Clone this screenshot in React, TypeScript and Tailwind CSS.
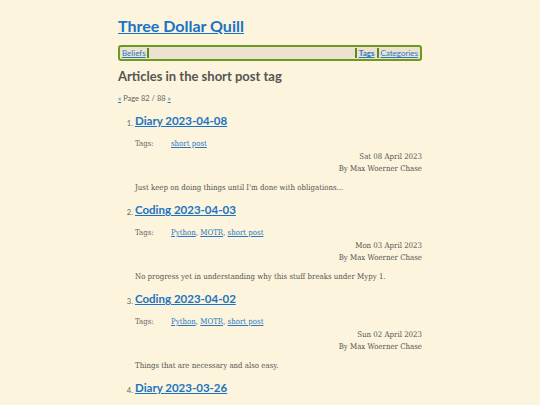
import React from "react";

const posts = [
  { title: "Diary 2023-04-08", tags: ["short post"], date: "Sat 08 April 2023", excerpt: "Just keep on doing things until I'm done with obligations..." },
  { title: "Coding 2023-04-03", tags: ["Python", "MOTR", "short post"], date: "Mon 03 April 2023", excerpt: "No progress yet in understanding why this stuff breaks under Mypy 1." },
  { title: "Coding 2023-04-02", tags: ["Python", "MOTR", "short post"], date: "Sun 02 April 2023", excerpt: "Things that are necessary and also easy." },
  { title: "Diary 2023-03-26", tags: ["short post"], date: "Sun 26 March 2023", excerpt: "..." },
];

const sans = "font-['Lato',sans-serif]";
const serif = "font-['DejaVu_Serif_Condensed','DejaVu_Serif',serif]";

export default function App() {
  return (
    <div className="min-h-[405px] h-[405px] overflow-hidden bg-[#fcf4dc] text-[#555]">
      <div className="w-[304px] ml-[118px] pt-[14px]">
        <h1 className={`${sans} text-[16px] font-bold leading-[24px] text-[#1a73c4] underline`}>Three Dollar Quill</h1>
        <nav className={`${sans} mt-[7px] h-[16px] border-2 border-[#6b9a22] rounded-[3px] bg-[#ebe3cf] flex items-center text-[8px] px-[2px]`}>
          <a className="text-[#2a78c0] underline pr-[1px] border-r-2 border-[#5f8a1c] leading-[10px]">Beliefs</a>
          <div className="flex-1" />
          <a className="text-[#2a78c0] underline font-bold px-[2px] border-l-2 border-r-2 border-[#5f8a1c] leading-[10px]">Tags</a>
          <a className="text-[#2a78c0] underline pl-[2px] leading-[10px]">Categories</a>
        </nav>
        <h2 className={`${sans} mt-[6px] text-[13px] font-bold leading-[18px] text-[#555]`}>Articles in the short post tag</h2>
        <div className={`${sans} mt-[9px] text-[7.5px] leading-[10px] text-[#666]`}>
          <a className="text-[#2a78c0] underline">«</a> Page 82 / 88 <a className="text-[#2a78c0] underline">»</a>
        </div>
        <ol className="mt-[8px]">
          {posts.map((p, i) => (
            <li key={i} className="flex h-[89px]">
              <span className={`${sans} w-[17px] text-right pr-[2px] text-[7.5px] text-[#666] pt-[7px] leading-[10px] shrink-0`}>{i + 1}.</span>
              <div className="flex-1">
                <h3 className={`${sans} text-[11.5px] font-bold leading-[17px] text-[#1a73c4] underline`}>{p.title}</h3>
                <div className={`${serif} text-[7.8px] mt-[10px] leading-[10px] flex`}>
                  <span className="w-[36px] text-[#666]">Tags:</span>
                  <span>
                    {p.tags.map((t, j) => (
                      <React.Fragment key={j}>
                        <a className="text-[#2a78c0] underline">{t}</a>
                        {j < p.tags.length - 1 ? ", " : ""}
                      </React.Fragment>
                    ))}
                  </span>
                </div>
                <div className={`${serif} text-[7.8px] text-right leading-[12px] mt-[2px] text-[#555]`}>
                  <div>{p.date}</div>
                  <div>By Max Woerner Chase</div>
                </div>
                <p className={`${serif} text-[7.8px] mt-[8px] leading-[10px] text-[#555]`}>{p.excerpt}</p>
              </div>
            </li>
          ))}
        </ol>
      </div>
    </div>
  );
}
